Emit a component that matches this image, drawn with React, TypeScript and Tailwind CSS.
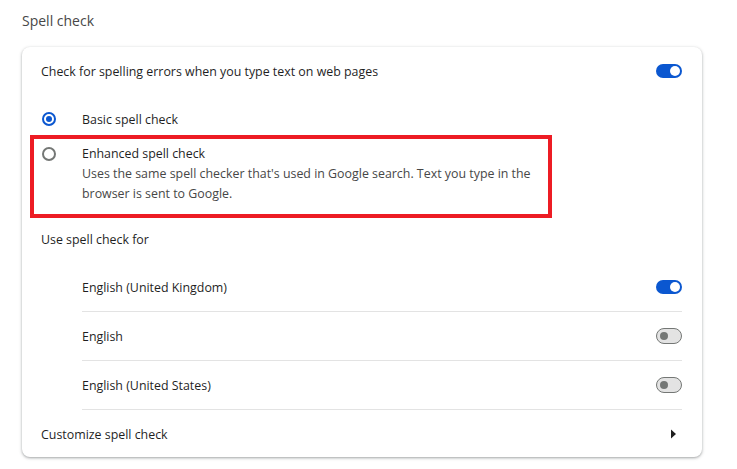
import React from "react";

const font = { fontFamily: '"Open Sans", "Noto Sans", sans-serif' };

const Toggle = ({ on }: { on: boolean }) =>
    on ? (
        <div className="relative w-[26px] h-[14px] rounded-full bg-[#0b57d0]">
            <div className="absolute right-[2px] top-[2px] w-[10px] h-[10px] rounded-full bg-white" />
        </div>
    ) : (
        <div className="relative w-[26px] h-[16px] rounded-full bg-[#e3e3e3] border border-[#747775]">
            <div className="absolute left-[3px] top-[3px] w-[8px] h-[8px] rounded-full bg-[#747775]" />
        </div>
    );

const Radio = ({ checked }: { checked: boolean }) => (
    <div
        className={
            checked
                ? "ml-[1px] w-[14px] h-[14px] rounded-full border-2 border-[#0b57d0] flex items-center justify-center shrink-0"
                : "ml-[1px] w-[14px] h-[14px] rounded-full border-2 border-[#747775] shrink-0"
        }
    >
        {checked && <div className="w-[6px] h-[6px] rounded-full bg-[#0b57d0]" />}
    </div>
);

const langs = [
    { name: "English (United Kingdom)", on: true },
    { name: "English", on: false },
    { name: "English (United States)", on: false },
];

export default function App() {
    return (
        <div className="w-[737px] h-[469px] bg-white pl-[22px] text-[12.4px] text-[#1f1f1f]" style={font}>
            <div className="pt-[11px] h-[47px] text-[14px] leading-[20px] text-[#474747]">Spell check</div>
            <div className="relative w-[680px] rounded-[8px] bg-white shadow-[0_1px_2px_rgba(60,64,67,0.3),0_1px_3px_1px_rgba(60,64,67,0.15)] pl-[19px] pr-[20px]">
                <div className="h-[48px] flex items-center justify-between">
                    <span className="pt-[3px]">Check for spelling errors when you type text on web pages</span>
                    <Toggle on={true} />
                </div>
                <div className="h-[48px] flex items-center">
                    <Radio checked={true} />
                    <span className="ml-[26px] pt-[2px]">Basic spell check</span>
                </div>
                <div className="flex items-start pt-[1px] pb-[11px]">
                    <div className="h-[20px] flex items-center">
                        <Radio checked={false} />
                    </div>
                    <div className="ml-[26px] leading-[20px]">
                        <div>Enhanced spell check</div>
                        <div className="text-[#474747] w-[450px]">
                            Uses the same spell checker that's used in Google search. Text you type in the browser is sent to Google.
                        </div>
                    </div>
                </div>
                <div className="h-[48px] flex items-center">
                    <span className="pt-[2px]">Use spell check for</span>
                </div>
                <div className="pl-[41px]">
                    {langs.map((l) => (
                        <div key={l.name} className="h-[49px] flex items-center justify-between border-b border-[#e3e3e3]">
                            <span className="pt-[2px]">{l.name}</span>
                            <Toggle on={l.on} />
                        </div>
                    ))}
                </div>
                <div className="h-[47px] flex items-center justify-between">
                    <span className="pt-[3px]">Customize spell check</span>
                    <svg width="6" height="10" viewBox="0 0 6 10" className="mr-[5px]">
                        <path d="M0 0.5 L5 5 L0 9.5 Z" fill="#1f1f1f" />
                    </svg>
                </div>
                <div className="absolute left-[8px] top-[88px] w-[522px] h-[83px] border-4 border-[#ed1c24] pointer-events-none" />
            </div>
        </div>
    );
}
